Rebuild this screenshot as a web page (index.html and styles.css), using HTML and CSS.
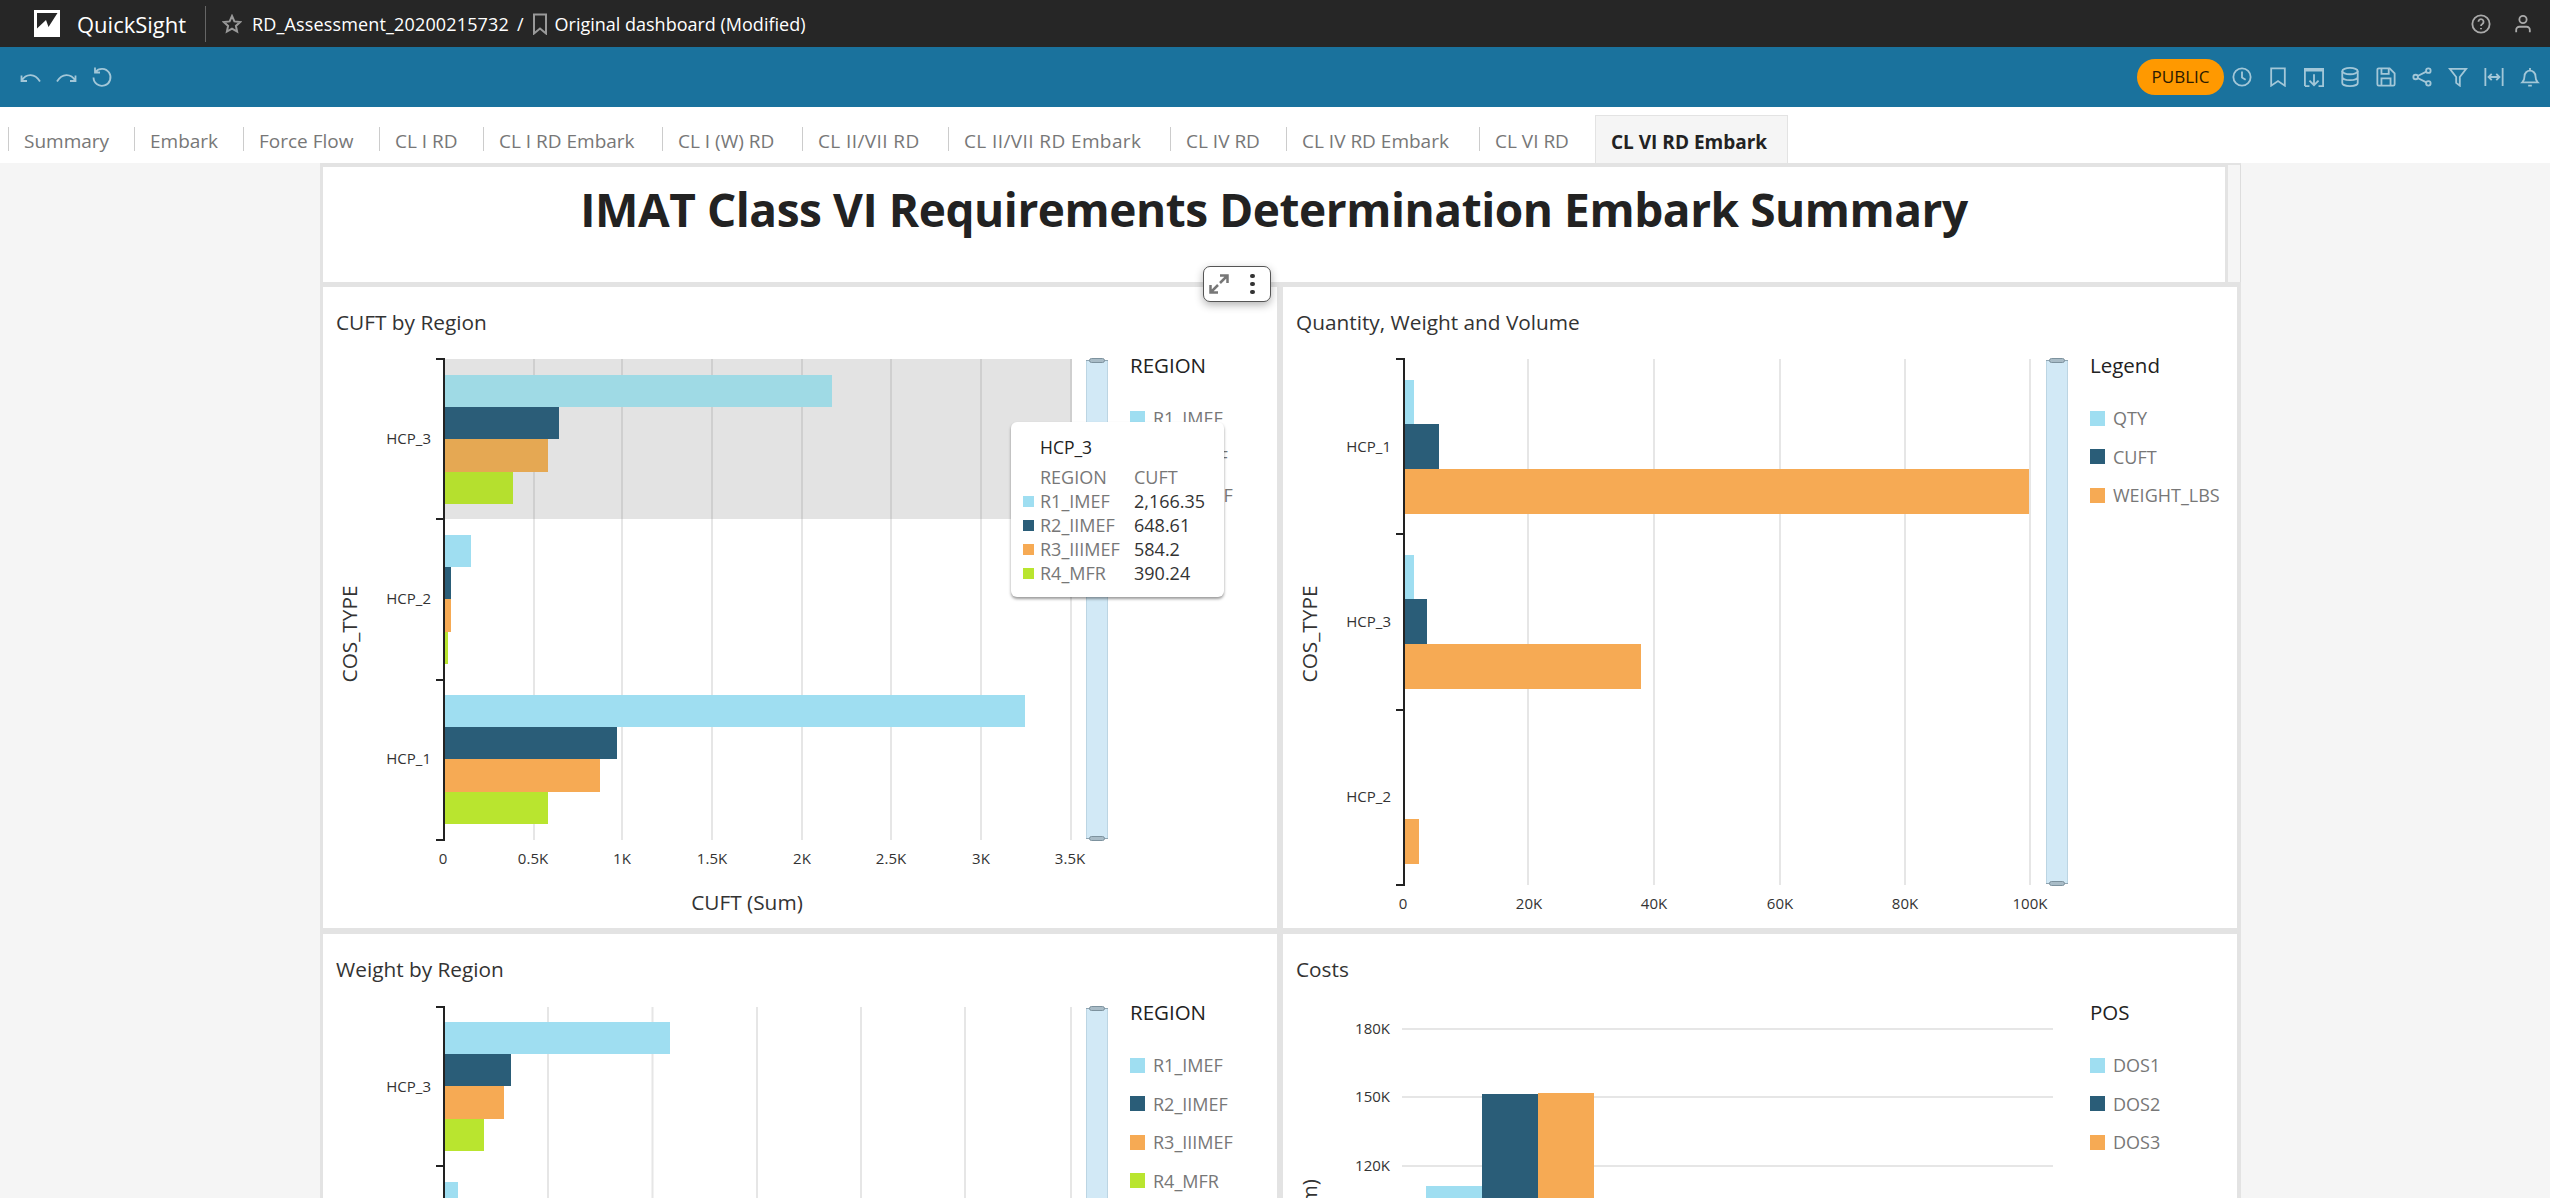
FILE: index.html
```html
<!DOCTYPE html>
<html lang="en">
<head>
  <meta charset="UTF-8" />
  <title>QuickSight - RD_Assessment_20200215732</title>
  <link rel="stylesheet" href="styles.css">
</head>
<body>

  <!-- top bar -->
  <header class="topbar">
    <svg class="logo" viewBox="0 0 26 27"><path fill="#fff" d="M0 0h26v27H0z"/><path fill="#262626" d="M3 3H23.500L14.500 17 12 10 3 18.500z"/></svg>
    <span class="brand">QuickSight</span>
    <span class="topbar-sep"></span>
    <svg class="crumb-icon star" viewBox="0 0 20 20"><path d="M10 2l2.400 5.400 5.800.6-4.300 3.900 1.200 5.700L10 14.700l-5.100 2.900 1.200-5.700L1.800 8l5.800-.6z"/></svg>
    <span class="crumb crumb-name">RD_Assessment_20200215732</span>
    <span class="crumb slash">/</span>
    <svg class="crumb-icon mark" viewBox="0 0 16 22"><path d="M2 1.500h12v19l-6-5-6 5z"/></svg>
    <span class="crumb">Original dashboard (Modified)</span>
    <div class="topbar-right">
      <svg class="top-icon" viewBox="0 0 22 22"><circle cx="11" cy="11" r="9.500"/><path d="M8.200 8.500a2.800 2.800 0 1 1 4.300 2.400c-1 .6-1.500 1.100-1.500 2.200"/><path d="M11 15.500v1.200"/></svg>
      <svg class="top-icon" viewBox="0 0 22 22"><circle cx="11" cy="6" r="4"/><path d="M3.500 20v-2.500a3.500 3.500 0 0 1 3.500-3.500h8a3.500 3.500 0 0 1 3.500 3.500V20"/></svg>
    </div>
  </header>

  <!-- toolbar -->
  <div class="toolbar">
    <svg class="tool-icon" viewBox="0 0 21 21"><path d="M1.500 8.500V14H7M1.500 14C6 6 15 6 20 14.500"/></svg>
    <svg class="tool-icon" viewBox="0 0 21 21"><path d="M19.500 8.500V14H14M19.500 14C15 6 6 6 1 14.500"/></svg>
    <svg class="tool-icon" viewBox="0 0 21 21"><path d="M3 .5V5.500H8M3.400 5A8.500 8.500 0 1 1 1.500 10.500"/></svg>
    <div class="toolbar-right">
      <span class="pill">PUBLIC</span>
      <svg class="bar-icon" viewBox="0 0 22 22"><circle cx="11" cy="11" r="9.500"/><path d="M11 5v6.500l4 2.500"/></svg>
      <svg class="bar-icon" viewBox="0 0 22 22"><path d="M3.500 1.500h15v19L11 15.500l-7.500 5z"/></svg>
      <svg class="bar-icon" viewBox="0 0 22 22"><path d="M1 21V2h20v19h-5M6 21H1M1 2h20v2H1z"/><path d="M11 8v12M6 15l5 5 5-5"/></svg>
      <svg class="bar-icon" viewBox="0 0 22 22"><ellipse cx="11" cy="4.500" rx="8.500" ry="3.500"/><path d="M2.500 4.500v13c0 2 3.800 3.500 8.500 3.500s8.500-1.500 8.500-3.500v-13M2.500 11c0 2 3.800 3.500 8.500 3.500s8.500-1.500 8.500-3.500"/></svg>
      <svg class="bar-icon" viewBox="0 0 22 22"><path d="M1.500 3a1.500 1.500 0 0 1 1.500-1.500h12l5.500 5.500v12a1.500 1.500 0 0 1-1.500 1.500H3A1.500 1.500 0 0 1 1.500 19z"/><path d="M6 1.500v6h8v-6M6 20.500v-8h10v8"/></svg>
      <svg class="bar-icon" viewBox="0 0 22 22"><circle cx="4" cy="11" r="2.500"/><circle cx="18" cy="4" r="2.500"/><circle cx="18" cy="18" r="2.500"/><path d="M6.200 9.900l9.600-4.800M6.200 12.100l9.600 4.800"/></svg>
      <svg class="bar-icon" viewBox="0 0 22 22"><path d="M2 2h18l-7 9v9.500l-4-3V11z"/></svg>
      <svg class="bar-icon" viewBox="0 0 22 22"><path d="M1.500 1v20M20.500 1v20M5 11h12M8.500 7.500L5 11l3.500 3.500M13.500 7.500L17 11l-3.500 3.500"/></svg>
      <svg class="bar-icon" viewBox="0 0 22 22"><path d="M2.500 17c2-2 2.500-3.500 2.500-7a6 6 0 0 1 12 0c0 3.500.5 5 2.500 7z"/><path d="M11 1v3M9 20.500h4"/></svg>
    </div>
  </div>

  <!-- sheet tabs -->
  <nav class="tabs">
    <span class="tab">Summary</span>
    <span class="tab">Embark</span>
    <span class="tab">Force Flow</span>
    <span class="tab">CL I RD</span>
    <span class="tab">CL I RD Embark</span>
    <span class="tab">CL I (W) RD</span>
    <span class="tab spaced">CL II/VII RD</span>
    <span class="tab spaced">CL II/VII RD Embark</span>
    <span class="tab">CL IV RD</span>
    <span class="tab">CL IV RD Embark</span>
    <span class="tab">CL VI RD</span>
    <span class="tab active">CL VI RD Embark</span>
  </nav>

  <main class="sheet">
    <div class="title-row">
      <h1 class="sheet-title">IMAT Class VI Requirements Determination Embark Summary</h1>
      <div class="title-gutter"></div>
    </div>

    <div class="visual-menu">
      <svg class="expand" viewBox="0 0 20 20"><path d="M11 1.500h7.500V9M18 2l-7 7M9 18.500H1.500V11M2 18l7-7"/></svg>
      <span class="dots"><i></i><i></i><i></i></span>
    </div>

    <div class="grid">
      <!-- CUFT by Region -->
      <section class="panel">
        <h2 class="panel-title">CUFT by Region</h2>
        <div class="chart-row">
          <svg class="plot" viewBox="323 349 800 579">
            <rect class="band" x="444" y="359" width="627" height="160"/>
            <g class="grid-lines">
              <path d="M534 359V840M622 359V840M712 359V840M802 359V840M891 359V840M981 359V840M1071 359V840"/>
            </g>
            <g class="grid-lines on-band">
              <path d="M534 359V519M622 359V519M712 359V519M802 359V519M891 359V519M981 359V519M1071 359V519"/>
            </g>
            <rect class="c1 dim" x="444" y="375" width="388" height="32"/>
            <rect class="c2 dim" x="444" y="407" width="115" height="32"/>
            <rect class="c3 dim" x="444" y="439" width="104" height="33"/>
            <rect class="c4 dim" x="444" y="472" width="69" height="32"/>
            <rect class="c1" x="444" y="535" width="27" height="32"/>
            <rect class="c2" x="444" y="567" width="7" height="32"/>
            <rect class="c3" x="444" y="599" width="7" height="33"/>
            <rect class="c4" x="444" y="632" width="4" height="32"/>
            <rect class="c1" x="444" y="695" width="581" height="32"/>
            <rect class="c2" x="444" y="727" width="173" height="32"/>
            <rect class="c3" x="444" y="759" width="156" height="33"/>
            <rect class="c4" x="444" y="792" width="104" height="32"/>
            <path class="axis" d="M436 359H444V840H436M436 519H444M436 680H444"/>
            <text class="tick end" x="431" y="444">HCP_3</text>
            <text class="tick end" x="431" y="604">HCP_2</text>
            <text class="tick end" x="431" y="764">HCP_1</text>
            <g class="tick mid">
              <text x="443" y="864">0</text><text x="533" y="864">0.5K</text><text x="622" y="864">1K</text>
              <text x="712" y="864">1.5K</text><text x="802" y="864">2K</text><text x="891" y="864">2.5K</text>
              <text x="981" y="864">3K</text><text x="1070" y="864">3.5K</text>
            </g>
            <text class="axis-title mid" x="747" y="910">CUFT (Sum)</text>
            <text class="axis-title mid" transform="translate(357 634) rotate(-90)">COS_TYPE</text>
            <rect class="scroll" x="1086.500" y="360.500" width="21" height="478"/>
            <path class="scroll-edge" d="M1086 360.500H1108M1086 838.500H1108"/>
            <rect class="scroll-grip" x="1089.500" y="358.500" width="15" height="4" rx="2"/>
            <rect class="scroll-grip" x="1089.500" y="836.500" width="15" height="4" rx="2"/>
          </svg>
          <div class="legend">
            <div class="legend-title">REGION</div>
            <div class="legend-item"><i class="swatch s1"></i>R1_IMEF</div>
            <div class="legend-item"><i class="swatch s2"></i>R2_IIMEF</div>
            <div class="legend-item"><i class="swatch s3"></i>R3_IIIMEF</div>
          </div>
        </div>
        <div class="tooltip">
          <div class="tip-head">HCP_3</div>
          <div class="tip-row tip-cols"><span class="tip-name">REGION</span><span class="tip-val">CUFT</span></div>
          <div class="tip-row"><i class="tip-swatch s1"></i><span class="tip-name">R1_IMEF</span><span class="tip-val">2,166.35</span></div>
          <div class="tip-row"><i class="tip-swatch s2"></i><span class="tip-name">R2_IIMEF</span><span class="tip-val">648.61</span></div>
          <div class="tip-row"><i class="tip-swatch s3"></i><span class="tip-name">R3_IIIMEF</span><span class="tip-val">584.2</span></div>
          <div class="tip-row"><i class="tip-swatch s4"></i><span class="tip-name">R4_MFR</span><span class="tip-val">390.24</span></div>
        </div>
      </section>

      <!-- Quantity, Weight and Volume -->
      <section class="panel">
        <h2 class="panel-title">Quantity, Weight and Volume</h2>
        <div class="chart-row">
          <svg class="plot" viewBox="1283 349 800 579">
            <g class="grid-lines">
              <path d="M1528 359V885M1654 359V885M1780 359V885M1905 359V885M2030 359V885"/>
            </g>
            <rect class="c1" x="1404" y="380" width="10" height="44"/>
            <rect class="c2" x="1404" y="424" width="35" height="45"/>
            <rect class="c3" x="1404" y="469" width="625" height="45"/>
            <rect class="c1" x="1404" y="555" width="10" height="44"/>
            <rect class="c2" x="1404" y="599" width="23" height="45"/>
            <rect class="c3" x="1404" y="644" width="237" height="45"/>
            <rect class="c2" x="1404" y="774" width="1" height="45"/>
            <rect class="c3" x="1404" y="819" width="15" height="45"/>
            <path class="axis" d="M1396 359H1404V885H1396M1396 534H1404M1396 710H1404"/>
            <text class="tick end" x="1391" y="452">HCP_1</text>
            <text class="tick end" x="1391" y="627">HCP_3</text>
            <text class="tick end" x="1391" y="802">HCP_2</text>
            <g class="tick mid">
              <text x="1403" y="909">0</text><text x="1529" y="909">20K</text><text x="1654" y="909">40K</text>
              <text x="1780" y="909">60K</text><text x="1905" y="909">80K</text><text x="2030" y="909">100K</text>
            </g>
            <text class="axis-title mid" transform="translate(1317 634) rotate(-90)">COS_TYPE</text>
            <rect class="scroll" x="2046.500" y="360.500" width="21" height="523"/>
            <path class="scroll-edge" d="M2046 360.500H2068M2046 883.500H2068"/>
            <rect class="scroll-grip" x="2049.500" y="358.500" width="15" height="4" rx="2"/>
            <rect class="scroll-grip" x="2049.500" y="881.500" width="15" height="4" rx="2"/>
          </svg>
          <div class="legend">
            <div class="legend-title">Legend</div>
            <div class="legend-item"><i class="swatch s1"></i>QTY</div>
            <div class="legend-item"><i class="swatch s2"></i>CUFT</div>
            <div class="legend-item"><i class="swatch s3"></i>WEIGHT_LBS</div>
          </div>
        </div>
      </section>

      <!-- Weight by Region -->
      <section class="panel">
        <h2 class="panel-title">Weight by Region</h2>
        <div class="chart-row">
          <svg class="plot" viewBox="323 997 800 579">
            <g class="grid-lines">
              <path d="M548 1008V1300M652.500 1008V1300M757 1008V1300M861 1008V1300M965 1008V1300M1071 1008V1300"/>
            </g>
            <rect class="c1" x="444" y="1023" width="226" height="32"/>
            <rect class="c2" x="444" y="1055" width="67" height="32"/>
            <rect class="c3" x="444" y="1087" width="60" height="33"/>
            <rect class="c4" x="444" y="1120" width="40" height="32"/>
            <rect class="c1" x="444" y="1183" width="14" height="32"/>
            <path class="axis" d="M436 1008H444V1300M436 1167H444"/>
            <text class="tick end" x="431" y="1093">HCP_3</text>
            <rect class="scroll" x="1086.500" y="1009.500" width="21" height="300"/>
            <path class="scroll-edge" d="M1086 1009.500H1108"/>
            <rect class="scroll-grip" x="1089.500" y="1007.500" width="15" height="4" rx="2"/>
          </svg>
          <div class="legend">
            <div class="legend-title">REGION</div>
            <div class="legend-item"><i class="swatch s1"></i>R1_IMEF</div>
            <div class="legend-item"><i class="swatch s2"></i>R2_IIMEF</div>
            <div class="legend-item"><i class="swatch s3"></i>R3_IIIMEF</div>
            <div class="legend-item"><i class="swatch s4"></i>R4_MFR</div>
          </div>
        </div>
      </section>

      <!-- Costs -->
      <section class="panel">
        <h2 class="panel-title">Costs</h2>
        <div class="chart-row">
          <svg class="plot" viewBox="1283 997 800 579">
            <g class="grid-lines">
              <path d="M1402 1030H2053M1402 1098H2053M1402 1167H2053"/>
            </g>
            <rect class="c1" x="1426" y="1187" width="56" height="100"/>
            <rect class="c2" x="1482" y="1095" width="56" height="200"/>
            <rect class="c3" x="1538" y="1094" width="56" height="200"/>
            <text class="tick end" x="1390" y="1035">180K</text>
            <text class="tick end" x="1390" y="1103">150K</text>
            <text class="tick end" x="1390" y="1172">120K</text>
            <text class="axis-title end" transform="translate(1317 1180) rotate(-90)">COST (Sum)</text>
          </svg>
          <div class="legend">
            <div class="legend-title">POS</div>
            <div class="legend-item"><i class="swatch s1"></i>DOS1</div>
            <div class="legend-item"><i class="swatch s2"></i>DOS2</div>
            <div class="legend-item"><i class="swatch s3"></i>DOS3</div>
          </div>
        </div>
      </section>
    </div>
  </main>

</body>
</html>
```

FILE: styles.css
```css
html, body {
  margin: 0;
  padding: 0;
  height: 100%;
  overflow: hidden;
  background: #f5f5f5;
  font-family: 'Open Sans', 'Noto Sans', sans-serif;
  color: #222;
}

/* top bar */
.topbar {
  display: flex;
  align-items: center;
  height: 47px;
  padding: 0 17px 0 34px;
  box-sizing: border-box;
  background: #262626;
  color: #fff;
}

.logo {
  width: 26px;
  height: 27px;
  margin-right: 17px;
}

.brand {
  font-size: 22px;
  width: 128px;
}

.topbar-sep {
  width: 1px;
  height: 36px;
  background: #666;
  margin-right: 16px;
}

.crumb {
  font-size: 18px;
  white-space: nowrap;
}

.crumb-name {
  letter-spacing: 0.15px;
}

.slash {
  margin: 0 8px;
}

.crumb-icon {
  fill: none;
  stroke: #999;
  stroke-width: 2;
}

.star {
  width: 20px;
  height: 20px;
  margin-right: 10px;
}

.mark {
  width: 16px;
  height: 22px;
  margin-right: 7px;
}

.topbar-right {
  display: flex;
  align-items: center;
  gap: 22px;
  margin-left: auto;
}

.top-icon {
  width: 20px;
  height: 20px;
  fill: none;
  stroke: #aaa;
  stroke-width: 2;
}

/* toolbar */
.toolbar {
  display: flex;
  align-items: center;
  gap: 15px;
  height: 60px;
  padding: 0 10px 0 20px;
  box-sizing: border-box;
  background: #1a729d;
}

.tool-icon {
  width: 21px;
  height: 21px;
  fill: none;
  stroke: #a3c7d8;
  stroke-width: 1.8;
}

.toolbar-right {
  display: flex;
  align-items: center;
  gap: 16px;
  margin-left: auto;
}

.pill {
  width: 87px;
  height: 36px;
  line-height: 36px;
  text-align: center;
  border-radius: 18px;
  background: #ff9900;
  color: #2b1a00;
  font-size: 17px;
  margin-right: -8px;
}

.bar-icon {
  width: 20px;
  height: 20px;
  fill: none;
  stroke: #a3c7d8;
  stroke-width: 2;
}

/* tabs */
.tabs {
  display: grid;
  grid-template-columns: 126px 109px 136px 104px 179px 140px 146px 222px 116px 193px 116px 193px;
  align-items: end;
  height: 56px;
  padding-left: 8px;
  box-sizing: border-box;
  background: #fff;
}

.tab {
  position: relative;
  height: 48px;
  line-height: 52px;
  padding-left: 16px;
  box-sizing: border-box;
  font-size: 19px;
  color: #777;
  white-space: nowrap;
}

.tab::before {
  content: "";
  position: absolute;
  left: 0;
  top: 12px;
  width: 1px;
  height: 24px;
  background: #ccc;
}

.tab.spaced {
  letter-spacing: 0.4px;
}

.tab.active {
  background: #f5f5f5;
  border: 1px solid #e3e3e3;
  border-bottom: 0;
  padding-left: 15px;
  color: #222;
  font-weight: 700;
}

.tab.active::before {
  display: none;
}

/* sheet */
.sheet {
  position: relative;
  width: 1921px;
  margin-left: 320px;
  box-sizing: border-box;
  padding: 4px 4px 0 3px;
  background: #e3e3e3;
}

.title-row {
  display: flex;
  height: 115px;
  margin-bottom: 5px;
}

.sheet-title {
  flex: 1;
  margin: 0;
  padding-top: 8px;
  box-sizing: border-box;
  background: #fff;
  text-align: center;
  font-size: 46px;
  letter-spacing: -0.45px;
  line-height: 68px;
  font-weight: 700;
  color: #222;
}

.title-gutter {
  width: 13px;
  box-sizing: border-box;
  margin: -3px -4px 0 3px;
  background: #f5f5f5;
  border-right: 1px solid #ddd;
  border-top: 1px solid #e3e3e3;
}

.visual-menu {
  position: absolute;
  left: 883px;
  top: 103px;
  display: flex;
  align-items: center;
  gap: 21px;
  width: 68px;
  height: 36px;
  padding-left: 5px;
  box-sizing: border-box;
  background: #fff;
  border: 1px solid #555;
  border-radius: 7px;
  box-shadow: 0 3px 8px rgba(0, 0, 0, 0.3);
  z-index: 5;
}

.expand {
  width: 20px;
  height: 20px;
  fill: none;
  stroke: #777;
  stroke-width: 2.5;
}

.dots {
  display: flex;
  flex-direction: column;
  gap: 3.500px;
}

.dots i {
  width: 4.500px;
  height: 4.500px;
  border-radius: 50%;
  background: #333;
}

.grid {
  display: grid;
  grid-template-columns: 954px 954px;
  grid-auto-rows: 641px;
  gap: 6px;
}

/* panels */
.panel {
  position: relative;
  background: #fff;
  min-width: 0;
}

.panel-title {
  margin: 0;
  padding: 21px 13px 0;
  height: 62px;
  box-sizing: border-box;
  font-size: 20.800px;
  line-height: 28px;
  font-weight: 400;
  color: #333;
}

.chart-row {
  display: flex;
}

.plot {
  width: 800px;
  height: 579px;
  flex: none;
}

.band {
  fill: #e3e3e3;
}

.grid-lines {
  fill: none;
  stroke: #e6e6e6;
  stroke-width: 2;
}

.grid-lines.on-band {
  stroke: #cfcfcf;
}

.axis {
  fill: none;
  stroke: #222;
  stroke-width: 2;
}

.tick {
  font-size: 15px;
  fill: #333;
}

.axis-title {
  font-size: 20.800px;
  fill: #333;
}

.end {
  text-anchor: end;
}

.mid {
  text-anchor: middle;
}

.c1 { fill: #9fdef1; }
.c2 { fill: #2a5d78; }
.c3 { fill: #f6aa54; }
.c4 { fill: #b9e52f; }

.c1.dim { fill: #9fdae5; }
.c2.dim { fill: #2b5d78; }
.c3.dim { fill: #e5a853; }
.c4.dim { fill: #b5e02e; }

.scroll {
  fill: #d2e9f6;
  stroke: #bcd5e3;
}

.scroll-edge {
  fill: none;
  stroke: #8fa5b2;
}

.scroll-grip {
  fill: #a9bcc7;
  stroke: #7d929e;
}

/* legend */
.legend {
  padding: 2px 0 0 7px;
}

.legend-title {
  height: 43px;
  font-size: 20.500px;
  line-height: 28px;
  color: #222;
  margin-bottom: 5px;
}

.legend-item {
  display: flex;
  align-items: center;
  gap: 8px;
  height: 38.500px;
  font-size: 18px;
  color: #777;
  white-space: nowrap;
}

.swatch {
  width: 15px;
  height: 15px;
}

.s1 { background: #9fdef1; }
.s2 { background: #2a5d78; }
.s3 { background: #f6aa54; }
.s4 { background: #b9e52f; }

/* tooltip */
.tooltip {
  position: absolute;
  left: 688px;
  top: 135px;
  width: 213px;
  height: 175px;
  padding: 13px 12px 0;
  box-sizing: border-box;
  background: #fff;
  border-radius: 6px;
  box-shadow: 0 2px 3px rgba(0, 0, 0, 0.4);
}

.tip-head {
  font-size: 17.500px;
  line-height: 24px;
  padding-left: 17px;
  margin-bottom: 6px;
  color: #222;
}

.tip-row {
  display: flex;
  align-items: center;
  height: 24px;
  font-size: 18px;
  padding-left: 17px;
  position: relative;
}

.tip-cols {
  color: #777;
}

.tip-swatch {
  position: absolute;
  left: 0;
  width: 11px;
  height: 11px;
}

.tip-name {
  width: 94px;
  color: #777;
}

.tip-val {
  color: #333;
}

.tip-cols .tip-val {
  color: #777;
}
```
